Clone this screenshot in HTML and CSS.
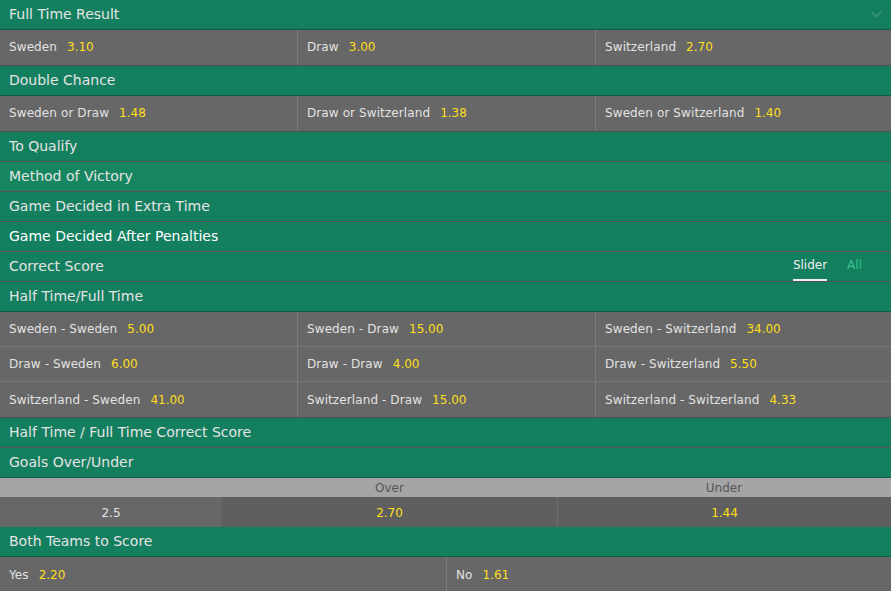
FILE: index.html
```html
<!DOCTYPE html>
<html lang="en">
<head>
<meta charset="UTF-8" />
<title>Sweden v Switzerland - Markets</title>
<link rel="stylesheet" href="styles.css">
</head>
<body>

<div class="markets">

  <section class="market">
    <div class="market-header">
      <span>Full Time Result</span>
      <svg class="chevron" width="11" height="7" viewBox="0 0 11 7"><path d="M1 1l4.5 4.5 4.5-4.5" fill="none" stroke="#3f9a7a" stroke-width="1.4"/></svg>
    </div>
    <div class="odds-row cols-3">
      <div class="odd"><span class="label">Sweden</span><span class="price">3.10</span></div>
      <div class="odd"><span class="label">Draw</span><span class="price">3.00</span></div>
      <div class="odd"><span class="label">Switzerland</span><span class="price">2.70</span></div>
    </div>
  </section>

  <section class="market">
    <div class="market-header"><span>Double Chance</span></div>
    <div class="odds-row cols-3">
      <div class="odd"><span class="label">Sweden or Draw</span><span class="price">1.48</span></div>
      <div class="odd"><span class="label">Draw or Switzerland</span><span class="price">1.38</span></div>
      <div class="odd"><span class="label">Sweden or Switzerland</span><span class="price">1.40</span></div>
    </div>
  </section>

  <section class="market closed">
    <div class="market-header"><span>To Qualify</span></div>
  </section>
  <section class="market closed">
    <div class="market-header hover"><span>Method of Victory</span></div>
  </section>
  <section class="market closed">
    <div class="market-header"><span>Game Decided in Extra Time</span></div>
  </section>
  <section class="market closed">
    <div class="market-header bright"><span>Game Decided After Penalties</span></div>
  </section>
  <section class="market closed">
    <div class="market-header">
      <span>Correct Score</span>
      <div class="tabs">
        <span class="tab active">Slider</span>
        <span class="tab">All</span>
      </div>
    </div>
  </section>

  <section class="market">
    <div class="market-header"><span>Half Time/Full Time</span></div>
    <div class="odds-grid">
      <div class="odds-row cols-3 thin">
        <div class="odd"><span class="label">Sweden - Sweden</span><span class="price">5.00</span></div>
        <div class="odd"><span class="label">Sweden - Draw</span><span class="price">15.00</span></div>
        <div class="odd"><span class="label">Sweden - Switzerland</span><span class="price">34.00</span></div>
      </div>
      <div class="odds-row cols-3 thin">
        <div class="odd"><span class="label">Draw - Sweden</span><span class="price">6.00</span></div>
        <div class="odd"><span class="label">Draw - Draw</span><span class="price">4.00</span></div>
        <div class="odd"><span class="label">Draw - Switzerland</span><span class="price">5.50</span></div>
      </div>
      <div class="odds-row cols-3 thin last">
        <div class="odd"><span class="label">Switzerland - Sweden</span><span class="price">41.00</span></div>
        <div class="odd"><span class="label">Switzerland - Draw</span><span class="price">15.00</span></div>
        <div class="odd"><span class="label">Switzerland - Switzerland</span><span class="price">4.33</span></div>
      </div>
    </div>
  </section>

  <section class="market closed">
    <div class="market-header"><span>Half Time / Full Time Correct Score</span></div>
  </section>

  <section class="market">
    <div class="market-header"><span>Goals Over/Under</span></div>
    <div class="ou-table">
      <div class="ou-head"></div>
      <div class="ou-head">Over</div>
      <div class="ou-head">Under</div>
      <div class="ou-line">2.5</div>
      <div class="ou-price">2.70</div>
      <div class="ou-price sep">1.44</div>
    </div>
  </section>

  <section class="market">
    <div class="market-header"><span>Both Teams to Score</span></div>
    <div class="odds-row cols-2 tail">
      <div class="odd"><span class="label">Yes</span><span class="price">2.20</span></div>
      <div class="odd"><span class="label">No</span><span class="price">1.61</span></div>
    </div>
  </section>

</div>

</body>
</html>
```

FILE: styles.css
```css
* {
  box-sizing: border-box;
  margin: 0;
  padding: 0;
}
body {
  font-family: 'DejaVu Sans', Verdana, sans-serif;
  background: #5a5a5a;
  color: #e2e2e2;
  width: 891px;
  height: 591px;
  overflow: hidden;
}

/* Market header bars */
.market-header {
  height: 30px;
  background: #147f5f;
  border-bottom: 1px solid #585358;
  display: flex;
  align-items: center;
  justify-content: space-between;
  padding: 0 9px 2px 9px;
  font-size: 14px;
  color: #e4e4e4;
}
.market-header.hover {
  background: #168661;
}
.market-header.bright {
  color: #ffffff;
}
.market:not(.closed) .market-header {
  border-bottom-color: #0e5c44;
}

.chevron {
  margin-top: 2px;
}

/* Slider / All tabs */
.tabs {
  display: flex;
  gap: 20px;
  align-self: stretch;
  margin-right: 20px;
  margin-bottom: -2px;
}
.tab {
  font-size: 12px;
  color: #3bc28d;
  display: flex;
  align-items: center;
  padding-bottom: 3px;
}
.tab.active {
  color: #eeeeee;
  border-bottom: 2px solid #eeeeee;
  padding-bottom: 1px;
}

/* Odds rows */
.odds-row {
  display: grid;
  height: 36px;
  background: #676767;
  border-bottom: 1px solid #4e4e4e;
  font-size: 12px;
}
.cols-3 {
  grid-template-columns: 297px 298px 1fr;
}
.cols-2 {
  grid-template-columns: 446px 1fr;
}
.odd {
  display: flex;
  align-items: center;
  padding: 0 9px 2px;
  border-left: 1px solid #7b7b7b;
}
.odd:first-child {
  border-left: none;
}
.label {
  color: #e2e2e2;
  letter-spacing: 0.1px;
}
.price {
  color: #ffdf1b;
  margin-left: 10px;
}
.odds-row.tail .odd {
  padding-bottom: 0;
}

.odds-grid {
  border-bottom: 1px solid #4e4e4e;
}
.odds-row.thin {
  height: 35px;
  border-bottom: 1px solid #777777;
}
.odds-row.thin .odd {
  padding-bottom: 0;
}
.odds-row.thin.last {
  border-bottom: none;
}

/* Over / under table */
.ou-table {
  display: grid;
  grid-template-columns: 222px 335px 1fr;
  grid-template-rows: 19px 30px;
  font-size: 12px;
}
.ou-head {
  background: #a5a5a5;
  color: #555555;
  display: flex;
  align-items: center;
  justify-content: center;
}
.ou-line {
  background: #676767;
  color: #e2e2e2;
  display: flex;
  align-items: center;
  justify-content: center;
  padding-top: 2px;
}
.ou-price {
  background: #5f5f5f;
  color: #ffdf1b;
  display: flex;
  align-items: center;
  justify-content: center;
  padding-top: 2px;
}
.ou-price.sep {
  border-left: 1px solid #6e6e6e;
}
```
